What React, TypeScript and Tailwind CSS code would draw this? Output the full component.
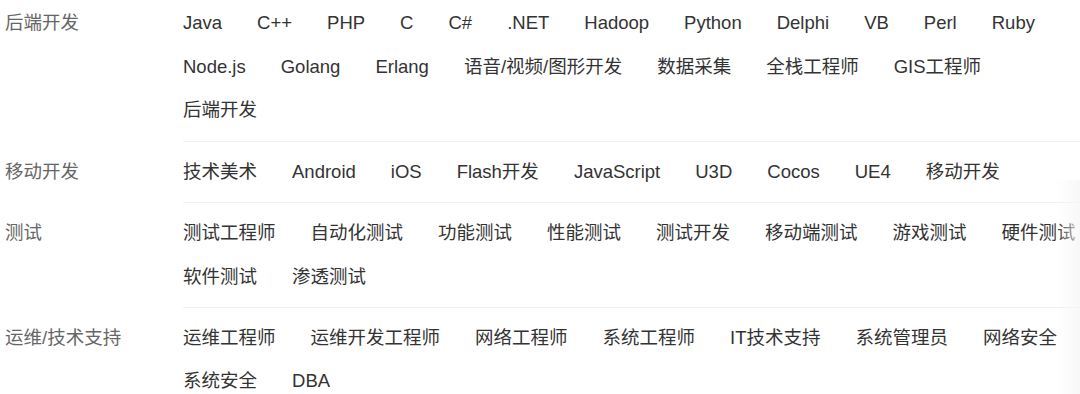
import React from 'react';

type Group = { name: string; items: string[] };

const groups: Group[] = [
  {
    name: '后端开发',
    items: [
      'Java', 'C++', 'PHP', 'C', 'C#', '.NET', 'Hadoop', 'Python', 'Delphi', 'VB', 'Perl', 'Ruby',
      'Node.js', 'Golang', 'Erlang', '语音/视频/图形开发', '数据采集', '全栈工程师', 'GIS工程师', '后端开发',
    ],
  },
  {
    name: '移动开发',
    items: ['技术美术', 'Android', 'iOS', 'Flash开发', 'JavaScript', 'U3D', 'Cocos', 'UE4', '移动开发'],
  },
  {
    name: '测试',
    items: ['测试工程师', '自动化测试', '功能测试', '性能测试', '测试开发', '移动端测试', '游戏测试', '硬件测试', '软件测试', '渗透测试'],
  },
  {
    name: '运维/技术支持',
    items: ['运维工程师', '运维开发工程师', '网络工程师', '系统工程师', 'IT技术支持', '系统管理员', '网络安全', '系统安全', 'DBA'],
  },
];

const App: React.FC = () => {
  return (
    <div
      className="relative w-[1080px] h-[394px] overflow-hidden bg-white text-[18.5px]"
      style={{ fontFamily: '"Liberation Sans", "Noto Sans CJK SC", sans-serif' }}
    >
      {groups.map((g, i) => (
        <div key={g.name} className="flex">
          {/* Category label */}
          <div className={`w-[183px] shrink-0 pl-[5px] text-[#666] leading-[43.5px] ${i === 0 ? 'pt-px' : 'pt-2'}`}>
            {g.name}
          </div>

          {/* Items */}
          <div
            className={`flex-1 flex flex-wrap gap-x-[35px] leading-[43.5px] text-[#333] ${
              i === 0 ? 'pt-px pb-[9.5px]' : 'pt-2 pb-[8.5px]'
            } ${i < groups.length - 1 ? 'border-b border-[#f0f0f5]' : ''}`}
          >
            {g.items.map((item) => (
              <span key={item} className="whitespace-nowrap">
                {item}
              </span>
            ))}
          </div>
        </div>
      ))}

      {/* faint shade on the right edge */}
      <div className="pointer-events-none absolute right-0 top-[180px] bottom-0 w-[24px] bg-linear-to-r from-transparent to-[#f6f6f6]/80" />
    </div>
  );
};

export default App;
